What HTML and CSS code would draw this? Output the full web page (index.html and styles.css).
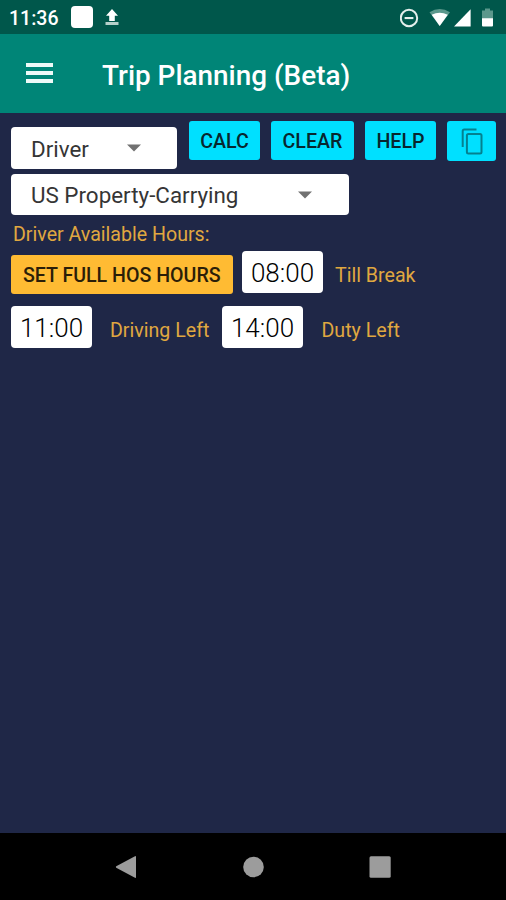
FILE: index.html
```html
<!DOCTYPE html>
<html lang="en">
    <head>
        <title>Trip Planning (Beta)</title>
        <meta charset="UTF-8">
        <meta name="viewport" content="width=device-width, initial-scale=1.0">
        <link rel="stylesheet" href="styles.css">
    </head>
    <body>
        <div class="status-bar">
            <span class="clock">11:36</span>
            <span class="app-square"></span>
            <svg class="upload" width="14" height="17" viewBox="0 0 14 17">
                <path d="M7 0L13 6.8H9.8V12H4.2V6.8H1z" fill="#fff"/>
                <path d="M.5 13H13.5V16H.5z" fill="#b5d0ca"/>
            </svg>
            <svg class="status-icons" width="96" height="22" viewBox="0 0 96 22">
                <circle cx="9" cy="11" r="8.2" fill="none" stroke="#e4efec" stroke-width="2"/>
                <path d="M4.6 10H13.4V12.1H4.6z" fill="#e4efec"/>
                <path d="M29.5 5.2Q39.7 -1.2 50 5.2L39.7 19z" fill="#5b988c"/>
                <path d="M31.7 7.8Q39.7 3.8 47.8 7.8L39.7 19z" fill="#fff"/>
                <path d="M70.6 2.3V19.5H54z" fill="#fff"/>
                <path d="M85 1.5H90V3.5H93V12H82V3.5H85z" fill="#5b988c"/>
                <path d="M82 11.2H93V18.5Q93 19.5 92 19.5H83Q82 19.5 82 18.5z" fill="#fff"/>
            </svg>
        </div>

        <div class="app-bar">
            <div class="menu-icon">
                <span></span>
                <span></span>
                <span></span>
            </div>
            <h1>Trip Planning (Beta)</h1>
        </div>

        <div class="content">
            <div class="row top-row">
                <div class="select select-driver">
                    <span>Driver</span>
                    <svg width="14" height="8" viewBox="0 0 14 8"><path d="M0 .5H14L7 7.5z" fill="#717171"/></svg>
                </div>
                <button class="btn btn-calc">CALC</button>
                <button class="btn btn-clear">CLEAR</button>
                <button class="btn btn-help">HELP</button>
                <button class="btn btn-copy" aria-label="Copy">
                    <svg width="22" height="27" viewBox="0 0 22 27">
                        <path d="M1.7 19V3Q1.7 1.5 3.2 1.5H15.5" fill="none" stroke="#04808f" stroke-width="2"/>
                        <rect x="5.9" y="6" width="14.6" height="19.4" rx="1.5" fill="none" stroke="#04808f" stroke-width="2"/>
                    </svg>
                </button>
            </div>

            <div class="select select-rule">
                <span>US Property-Carrying</span>
                <svg width="14" height="8" viewBox="0 0 14 8"><path d="M0 .5H14L7 7.5z" fill="#717171"/></svg>
            </div>

            <p class="label hours-title">Driver Available Hours:</p>

            <div class="row break-row">
                <button class="btn btn-hours">SET FULL HOS HOURS</button>
                <div class="time time-break">08:00</div>
                <span class="label till-break">Till Break</span>
            </div>

            <div class="row left-row">
                <div class="time">11:00</div>
                <span class="label driving-left">Driving Left</span>
                <div class="time">14:00</div>
                <span class="label duty-left">Duty Left</span>
            </div>
        </div>

        <div class="nav-bar">
            <svg width="22" height="24" viewBox="0 0 22 24"><path d="M20 1.2Q21 .7 21 1.8V22.2Q21 23.3 20 22.8L1.2 12.7Q.5 12 1.2 11.3z" fill="#9c9c9c"/></svg>
            <svg width="22" height="22" viewBox="0 0 22 22"><circle cx="11.5" cy="11" r="10.3" fill="#9c9c9c"/></svg>
            <svg width="22" height="22" viewBox="0 0 22 22"><rect x=".5" y=".3" width="21.2" height="21.4" rx="1.5" fill="#9c9c9c"/></svg>
        </div>
    </body>
</html>
```

FILE: styles.css
```css
:root {
    --status-color: #00574b;
    --primary-color: #008577;
    --page-color: #1f2747;
    --cyan: #00e0ff;
    --amber: #ffbb33;
    --label-color: #e0a840;
}

* {
    box-sizing: border-box;
    margin: 0;
    padding: 0;
}

body {
    display: flex;
    flex-direction: column;
    height: 900px;
    background: var(--page-color);
    font-family: Roboto, sans-serif;
    overflow: hidden;
}

.status-bar {
    display: flex;
    align-items: center;
    height: 34px;
    padding: 0 10px 0 9px;
    background: var(--status-color);
}

.clock {
    width: 62px;
    padding-top: 3px;
    color: #fff;
    font-size: 19.5px;
    font-weight: 500;
    line-height: 34px;
    white-space: nowrap;
}

.app-square {
    width: 22px;
    height: 22px;
    border-radius: 4px;
    background: #fff;
}

.upload {
    margin-left: 12px;
}

.status-icons {
    margin-left: auto;
    margin-top: 1px;
}

.app-bar {
    display: flex;
    align-items: center;
    height: 78.5px;
    padding-left: 26px;
    background: var(--primary-color);
}

.menu-icon {
    display: flex;
    flex-direction: column;
    gap: 4px;
    width: 27px;
}

.menu-icon span {
    height: 4px;
    background: #eefaf8;
}

h1 {
    margin: 4px 0 0 49px;
    color: #fff;
    font-size: 27.9px;
    font-weight: 500;
    white-space: nowrap;
}

.content {
    flex: 1;
    padding: 8.8px 10px 0 11px;
}

.row {
    display: flex;
    align-items: flex-start;
}

.select {
    display: flex;
    align-items: center;
    justify-content: space-between;
    height: 41.5px;
    padding-left: 20px;
    border-radius: 4px;
    background: #fff;
    color: #353535;
    font-size: 22.4px;
    white-space: nowrap;
}

.select-driver span {
    padding-top: 2px;
}

.select-driver {
    width: 166.5px;
    margin-top: 6px;
    padding-right: 36px;
}

.select-rule {
    width: 337.5px;
    margin-top: 5px;
    padding-right: 37px;
}

.btn {
    display: flex;
    align-items: center;
    justify-content: center;
    height: 38.6px;
    padding-top: 2px;
    border: none;
    border-radius: 3px;
    background: var(--cyan);
    color: #08262e;
    font-family: inherit;
    font-size: 19.6px;
    font-weight: 500;
    white-space: nowrap;
}

.btn-calc {
    width: 71.5px;
    margin-left: 11.5px;
}

.btn-clear {
    width: 83px;
    margin-left: 10.7px;
}

.btn-help {
    width: 72px;
    margin-left: 10.7px;
}

.btn-copy {
    width: 49px;
    height: 40px;
    margin-left: 10.6px;
    padding-top: 0;
}

.label {
    color: var(--label-color);
    font-size: 19.6px;
    white-space: nowrap;
}

.hours-title {
    margin: 8px 0 0 2px;
    line-height: 24px;
}

.break-row {
    margin-top: 4px;
}

.btn-hours {
    width: 221.5px;
    margin-top: 4px;
    background: var(--amber);
    color: #2b1e08;
}

.time {
    width: 81px;
    height: 42px;
    border-radius: 4px;
    background: #fff;
    color: #000;
    font-size: 26px;
    font-weight: 300;
    line-height: 45px;
    text-align: center;
}

.time-break {
    margin-left: 9.5px;
}

.left-row {
    margin-top: 7px;
}

.left-row .label,
.break-row .label {
    height: 48px;
    line-height: 50px;
}

.till-break {
    margin-left: 12px;
}

.driving-left {
    width: 112px;
    margin-left: 18px;
}

.duty-left {
    margin-left: 18.5px;
}

.nav-bar {
    display: flex;
    align-items: center;
    justify-content: space-between;
    height: 67px;
    padding: 0 115px;
    background: #000;
}
```
